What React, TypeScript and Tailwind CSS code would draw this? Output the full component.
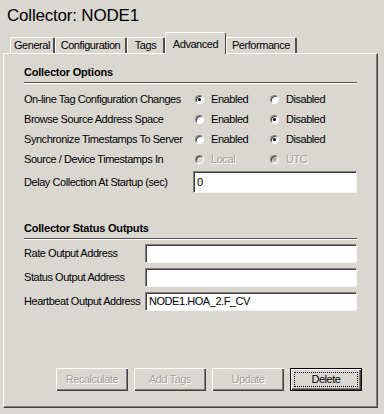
import React from "react";

const tabs = [
  { label: "General", w: "w-[45px]" },
  { label: "Configuration", w: "w-[72px]" },
  { label: "Tags", w: "w-[38px]" },
  { label: "Advanced", w: "w-[61px]", active: true },
  { label: "Performance", w: "w-[71px]" },
];

const optionRows = [
  { label: "On-line Tag Configuration Changes", a: "Enabled", b: "Disabled", on: "a" },
  { label: "Browse Source Address Space", a: "Enabled", b: "Disabled", on: "b" },
  { label: "Synchronize Timestamps To Server", a: "Enabled", b: "Disabled", on: "b" },
  { label: "Source / Device Timestamps In", a: "Local", b: "UTC", on: "b", disabled: true },
];

const outputRows = [
  { label: "Rate Output Address", value: "" },
  { label: "Status Output Address", value: "" },
  { label: "Heartbeat Output Address", value: "NODE1.HOA_2.F_CV" },
];

function Radio({ checked, disabled, label, w }: { checked: boolean; disabled?: boolean; label: string; w: string }) {
  return (
    <div className={`flex items-center shrink-0 ${w}`}>
      <span
        className={`flex items-center justify-center w-[9px] h-[9px] rounded-full border border-t-[#808080] border-l-[#808080] border-r-white border-b-white shadow-[inset_1px_1px_0_#404040] ${
          disabled ? "bg-[#dad7d1]" : "bg-white"
        }`}
      >
        {checked && <span className={`w-[3px] h-[3px] rounded-full ${disabled ? "bg-[#9a9892]" : "bg-black"}`} />}
      </span>
      <span className={`ml-[7px] ${disabled ? "text-[#a4a29c] [text-shadow:1px_1px_0_#fff]" : ""}`}>{label}</span>
    </div>
  );
}

function TextBox({ value }: { value: string }) {
  return (
    <div className="h-full bg-white border border-t-[#808080] border-l-[#808080] border-r-[#f4f3f0] border-b-[#f4f3f0] shadow-[inset_1px_1px_0_#404040] pl-[3px] flex items-center">
      {value}
    </div>
  );
}

function GroupHeader({ title }: { title: string }) {
  return (
    <div>
      <div className="font-bold leading-[16px] tracking-[-0.2px]">{title}</div>
      <div className="mt-[2px] w-[333px] h-[2px] border-t border-[#505050] border-b border-b-white" />
    </div>
  );
}

function Button({ label, disabled, primary }: { label: string; disabled?: boolean; primary?: boolean }) {
  if (primary) {
    return (
      <div className="w-[72px] h-[23px] border border-black">
        <div className="w-full h-full bg-[#dad7d1] shadow-[inset_1px_1px_0_#fff,inset_-1px_-1px_0_#404040,inset_-2px_-2px_0_#808080] p-[3px]">
          <div className="w-full h-full border border-dotted border-black flex items-center justify-center">{label}</div>
        </div>
      </div>
    );
  }
  return (
    <div
      className={`w-[72px] h-[23px] bg-[#dad7d1] flex items-center justify-center shadow-[inset_1px_1px_0_#fff,inset_-1px_-1px_0_#404040,inset_-2px_-2px_0_#808080] ${
        disabled ? "text-[#a4a29c] [text-shadow:1px_1px_0_#fff]" : ""
      }`}
    >
      {label}
    </div>
  );
}

export default function App() {
  return (
    <div className="w-[384px] h-[414px] bg-[#dad7d1] overflow-hidden whitespace-nowrap text-black text-[11px] tracking-[-0.45px] font-['Liberation_Sans',Arial,sans-serif]">
      {/* Title */}
      <div className="pl-[7px] pt-[6px] text-[17px] leading-[20px] tracking-[-0.2px]">Collector: NODE1</div>

      {/* Tabs */}
      <div className="ml-[10px] mt-[5px] h-[22px] flex items-end">
        {tabs.map((t) =>
          t.active ? (
            <div
              key={t.label}
              className={`relative z-10 ${t.w} h-[22px] -mb-px bg-[#dad7d1] border-t border-l border-white border-r border-r-[#404040] rounded-t-[2px] flex justify-center pt-[3px]`}
            >
              {t.label}
            </div>
          ) : (
            <div
              key={t.label}
              className={`${t.w} h-[16px] border-t border-l border-white border-r-2 border-r-[#505050] rounded-t-[2px] flex items-center justify-center`}
            >
              {t.label}
            </div>
          )
        )}
      </div>

      {/* Panel */}
      <div className="ml-[3px] w-[375px] h-[355px] flex flex-col border-t border-l border-white border-r border-b border-r-[#404040] border-b-[#404040] shadow-[inset_-1px_-1px_0_#808080] pl-[20px]">
        <div className="pt-[10px]">
          <GroupHeader title="Collector Options" />
        </div>

        <div className="mt-[5px] flex flex-col">
          {optionRows.map((r) => (
            <div key={r.label} className="h-[20px] flex items-center">
              <div className="w-[171px] shrink-0">{r.label}</div>
              <Radio w="w-[75px]" label={r.a} checked={r.on === "a"} disabled={r.disabled} />
              <Radio w="w-[80px]" label={r.b} checked={r.on === "b"} disabled={r.disabled} />
            </div>
          ))}
          <div className="mt-[2px] h-[22px] grid grid-cols-[169px_164px] items-center">
            <div className="overflow-hidden">Delay Collection At Startup (sec)</div>
            <TextBox value="0" />
          </div>
        </div>

        <div className="mt-[27px]">
          <GroupHeader title="Collector Status Outputs" />
        </div>

        <div className="mt-[4px] flex flex-col gap-[5px]">
          {outputRows.map((r) => (
            <div key={r.label} className="h-[19px] grid grid-cols-[121px_212px] items-center">
              <div className="overflow-hidden">{r.label}</div>
              <TextBox value={r.value} />
            </div>
          ))}
        </div>

        <div className="mt-auto mb-[16px] pr-[15px] flex justify-end gap-[6px]">
          <Button label="Recalculate" disabled />
          <Button label="Add Tags" disabled />
          <Button label="Update" disabled />
          <Button label="Delete" primary />
        </div>
      </div>
    </div>
  );
}
